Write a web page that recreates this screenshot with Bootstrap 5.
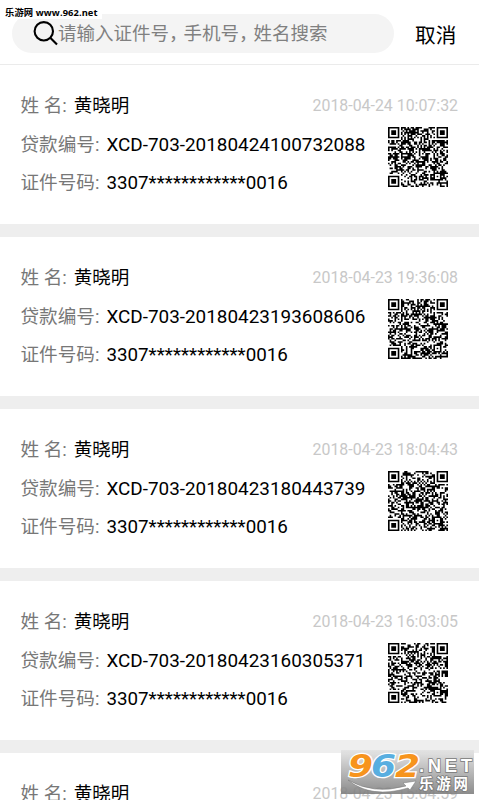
<!DOCTYPE html>
<html lang="zh-CN">
<head>
  <meta charset="UTF-8">
  <meta name="viewport" content="width=device-width, initial-scale=1.0">
  <title>贷款搜索</title>
  <link href="https://cdn.jsdelivr.net/npm/bootstrap@5.3.0/dist/css/bootstrap.min.css" rel="stylesheet">
  <style>
    body {
      font-family: Roboto, "Noto Sans CJK SC", sans-serif;
      font-size: 18.5px;
      line-height: 39px;
      color: #000;
      height: 800px;
      overflow: hidden;
    }
    .page {
      width: 479px;
      height: 800px;
    }
    .search-bar {
      height: 65px;
      padding: 14px 0 0 12px;
      border-bottom: 1px solid #ebebeb;
    }
    .search-box {
      width: 382px;
      height: 39px;
      padding-left: 21px;
      background: #f4f4f4;
      color: #808080;
      line-height: 44px;
    }
    .search-box .comma {
      letter-spacing: -4px;
    }
    .cancel {
      margin-left: 21px;
      font-size: 20.7px;
      line-height: 44px;
    }
    .loan {
      height: 172px;
      padding: 22px 21px 0 20.5px;
      border-bottom: 13px solid #eee;
    }
    .loan-line {
      height: 39px;
    }
    .loan-details {
      margin-top: -1px;
    }
    .loan-label {
      color: #777;
      font-size: 18.6px;
      margin-right: 7px;
    }
    .loan-value {
      font-size: 18.9px;
    }
    .id-number {
      font-size: 18.8px;
    }
    .loan-time {
      font-size: 15.9px;
      line-height: 38px;
      color: #c8c8c8;
    }
    .qr {
      width: 60px;
      height: 60px;
      margin: 2px 10px 0 0;
    }
    .site-tag {
      width: 102px;
      height: 19px;
      padding-left: 5px;
      background: #fff;
      font: bold 9.3px/25px "Open Sans", "Noto Sans CJK SC", sans-serif;
      letter-spacing: .1px;
    }
    .site-logo {
      left: 341px;
      top: 750px;
    }
  </style>
</head>
<body class="bg-white">
  <div class="page position-relative overflow-hidden">
    <header class="search-bar d-flex">
      <div class="search-box rounded-pill d-flex align-items-center">
        <svg width="25" height="25" viewBox="0 0 25 25" fill="none" stroke="#000" stroke-width="2.1">
          <circle cx="10.8" cy="10.3" r="9.2"/>
          <path d="M17.5 17L24 23.5"/>
        </svg>
        <span class="text-nowrap">请输入证件号<span class="comma">，</span>手机号<span class="comma">，</span>姓名搜索</span>
      </div>
      <span class="cancel">取消</span>
    </header>

    <main id="loans"></main>

    <div class="site-tag position-absolute top-0 start-0 text-nowrap">乐游网 www.962.net</div>

    <svg class="site-logo position-absolute" width="133" height="44" viewBox="0 0 133 44">
      <defs>
        <linearGradient id="plate" x1="0" y1="0" x2="0" y2="1">
          <stop offset="0" stop-color="#e2e2e2"/>
          <stop offset="1" stop-color="#7c7c7c"/>
        </linearGradient>
      </defs>
      <rect width="133" height="44" fill="url(#plate)" opacity=".88"/>
      <g font-family="DejaVu Sans" font-weight="bold" font-style="italic" font-size="32" stroke="#fff" stroke-width="2.5" paint-order="stroke">
        <text x="7" y="27" fill="#f7941d" textLength="25" lengthAdjust="spacingAndGlyphs">9</text>
        <text x="30" y="27" fill="#58aee0" textLength="25" lengthAdjust="spacingAndGlyphs">6</text>
        <text x="54" y="27" fill="#f7941d" textLength="25" lengthAdjust="spacingAndGlyphs">2</text>
      </g>
      <path d="M7 30Q32 45 65 36L62 33L75 31L69 40L67 38Q30 49 7 30Z" fill="#fff" stroke="#777" stroke-width=".5"/>
      <g fill="#fff" stroke="#777" stroke-width="1.5" paint-order="stroke" font-weight="bold">
        <text x="78" y="22" font-family="Liberation Sans" font-size="18.5" textLength="53">.NET</text>
        <text x="78" y="39" font-family="Noto Sans CJK SC" font-size="14.5" textLength="49">乐游网</text>
      </g>
    </svg>
  </div>

  <script src="https://cdn.jsdelivr.net/npm/bootstrap@5.3.0/dist/js/bootstrap.bundle.min.js"></script>
  <script>
    const loans = [
      { no: 'XCD-703-20180424100732088', time: '2018-04-24 10:07:32' },
      { no: 'XCD-703-20180423193608606', time: '2018-04-23 19:36:08' },
      { no: 'XCD-703-20180423180443739', time: '2018-04-23 18:04:43' },
      { no: 'XCD-703-20180423160305371', time: '2018-04-23 16:03:05' },
      { time: '2018-04-23 15:04:59' }
    ];
    const N = 37;

    // square rings: d is the distance from the centre of the marker
    function fixedModule(x, y) {
      for (const [cx, cy] of [[3, 3], [N - 4, 3], [3, N - 4]]) {
        const d = Math.max(Math.abs(x - cx), Math.abs(y - cy));
        if (d <= 4) return d !== 2 && d !== 4;
      }
      const a = Math.max(Math.abs(x - 30), Math.abs(y - 30));
      if (a <= 2) return a !== 1;
      if (x === 6) return y % 2 === 0;
      if (y === 6) return x % 2 === 0;
      return null;
    }

    function dataModule(x, y, seed) {
      let h = Math.imul(x + 1, 374761393) + Math.imul(y + 1, 668265263) + Math.imul(seed, 974634777);
      h = Math.imul(h ^ (h >>> 13), 1274126177);
      h = Math.imul(h ^ (h >>> 15), 2246822519);
      return ((h ^ (h >>> 16)) >>> 0) % 100 < 52;
    }

    function qrPath(seed) {
      let path = '';
      for (let y = 0; y < N; y++) {
        for (let x = 0; x < N; x++) {
          if (fixedModule(x, y) ?? dataModule(x, y, seed)) path += `M${x} ${y}h1v1h-1z`;
        }
      }
      return path;
    }

    function details(loan, i) {
      return `
        <div class="loan-details d-flex justify-content-between">
          <div class="text-nowrap">
            <div class="loan-line"><span class="loan-label">贷款编号:</span><span class="loan-value">${loan.no}</span></div>
            <div class="loan-line"><span class="loan-label">证件号码:</span><span class="loan-value id-number">3307************0016</span></div>
          </div>
          <svg class="qr" viewBox="0 0 ${N} ${N}"><path d="${qrPath(703 + i)}"/></svg>
        </div>`;
    }

    document.getElementById('loans').innerHTML = loans.map((loan, i) => `
      <section class="loan">
        <div class="loan-line d-flex justify-content-between">
          <div><span class="loan-label">姓 名:</span>黄晓明</div>
          <span class="loan-time">${loan.time}</span>
        </div>
        ${loan.no ? details(loan, i) : ''}
      </section>`).join('');
  </script>
</body>
</html>
